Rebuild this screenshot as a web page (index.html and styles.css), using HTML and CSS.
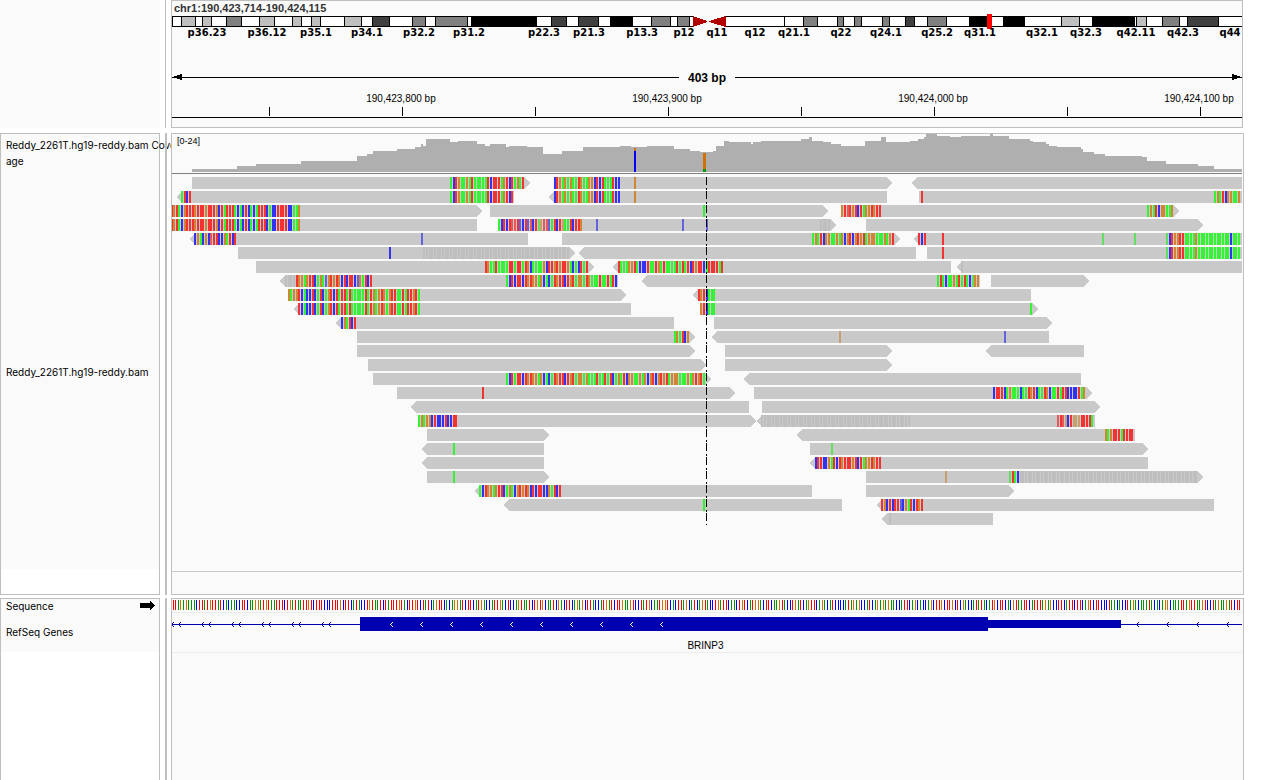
FILE: index.html
```html
<!DOCTYPE html>
<html lang="en">
<head>
<meta charset="utf-8">
<title>chr1:190,423,714-190,424,115</title>
<link rel="stylesheet" href="styles.css">
</head>
<body>
<main class="viewer">
  <section class="band band-header">
    <div class="names names-header"></div>
    <div class="divider divider-thin"></div>
    <div class="panel panel-header">
      <h1 class="locus">chr1:190,423,714-190,424,115</h1>
      <svg class="ideogram" id="ideogram" viewBox="172 14 1070 15" preserveAspectRatio="none"></svg>
      <div class="cyto-labels" id="cyto-labels"></div>
      <div class="span-row">
        <svg class="head" viewBox="0 0 10 7"><path d="M0 3h2v-1h3v-1h3v-1h2v6h-2v-1h-3v-1h-5z"/></svg>
        <span class="rule"></span>
        <span class="span-text">403 bp</span>
        <span class="rule"></span>
        <svg class="head" viewBox="0 0 10 7"><path d="M0 0h2v1h3v1h3v1h2v1h-5v1h-3v1h-2z"/></svg>
      </div>
      <div class="ruler-labels" id="ruler-labels"></div>
      <svg class="ruler" id="ruler" viewBox="172 104 1070 23" preserveAspectRatio="none"></svg>
    </div>
  </section>

  <section class="band band-data">
    <div class="names names-data">
      <div class="name name-coverage">Reddy_2261T.hg19-reddy.bam Cover<br>age</div>
      <div class="name name-reads">Reddy_2261T.hg19-reddy.bam</div>
    </div>
    <div class="divider"></div>
    <div class="panel panel-data">
      <div class="coverage-track">
        <svg class="coverage" id="coverage" viewBox="172 134 1070 40" preserveAspectRatio="none"></svg>
        <span class="scale">[0-24]</span>
      </div>
      <svg class="reads" id="reads" viewBox="172 174 1070 397" preserveAspectRatio="none"></svg>
    </div>
  </section>

  <section class="band band-features">
    <div class="names names-features">
      <div class="name name-sequence"><span>Sequence</span>
        <svg class="strand" viewBox="0 0 15 9"><path d="M0 2h10v-2h1v1h1v1h1v1h1v1h1v1h-1v1h-1v1h-1v1h-1v1h-1v-2h-10z"/></svg>
      </div>
      <div class="name name-genes">RefSeq Genes</div>
    </div>
    <div class="divider"></div>
    <div class="panel panel-features">
      <svg class="features" id="features" viewBox="172 599 1070 39" preserveAspectRatio="none"></svg>
      <div class="gene-name">BRINP3</div>
    </div>
  </section>
</main>
<script src="script.js"></script>
</body>
</html>
```
FILE: styles.css
```css
* { box-sizing: border-box; }

body {
  margin: 0;
  background: #fff;
  color: #000;
  font-family: "Liberation Sans", Arial, sans-serif;
  font-size: 10px;
}

.viewer {
  display: flex;
  flex-direction: column;
  min-height: 100vh;
}

.band {
  display: grid;
  grid-template-columns: 160px 2px 1fr;
  column-gap: 5px;
  padding-right: 18px;
}

.band-header { grid-template-columns: 160px 1px 1fr; padding-right: 19px; margin-bottom: 5px; }
.band-data { margin-bottom: 3px; }
.band-features { flex: 1; }

.divider { background: #bfbfbf; }

.panel {
  position: relative;
  z-index: 1;
  min-width: 0;
  border: 1px solid #bfbfbf;
  background: #fafafa;
}

.band .panel { margin-left: -1px; }
.band-header .panel { margin-left: 0; }

.names-header { background: #fafafa; }

.names-data,
.names-features {
  border: 1px solid #bfbfbf;
  background: #fff;
}

.name {
  padding-left: 5px;
  background: #fafafa;
  font-family: Inter, "Liberation Sans", sans-serif;
  line-height: 16px;
  white-space: nowrap;
}

svg { display: block; shape-rendering: crispEdges; }
.ideogram, .ruler, .coverage, .reads, .features { width: 100%; }

.locus {
  margin: 0;
  padding-left: 2px;
  height: 13px;
  font-size: 11px;
  line-height: 14px;
  color: #333;
}

.ideogram { height: 15px; }

.cyto-labels {
  position: relative;
  height: 10px;
  margin-top: -1px;
  font: bold 10px/10px "DejaVu Sans", sans-serif;
}

.cyto-labels span,
.ruler-labels span {
  position: absolute;
  top: 0;
  transform: translateX(-50%);
  white-space: nowrap;
}

.span-row {
  display: flex;
  align-items: center;
  height: 15px;
  margin-top: 32px;
  font-size: 12px;
  font-weight: bold;
}

.rule { flex: 1; height: 1px; background: #000; }
.span-text { padding: 2px 9px 0; line-height: 15px; }
.head { width: 10px; height: 7px; }

.ruler-labels { position: relative; height: 11px; margin-top: 8px; line-height: 12px; }
.ruler { height: 23px; }

.panel-data, .panel-features { padding-right: 1px; }
.panel-data { padding-bottom: 22px; }

.coverage-track { position: relative; }
.coverage { height: 40px; }
.scale { position: absolute; left: 5px; top: 1px; font-size: 9px; line-height: 12px; }

.reads { height: 398px; border-bottom: 1px solid #c8c8c8; }

.name-coverage { height: 40px; padding-top: 3px; }
.name-reads {
  display: flex;
  align-items: center;
  height: 395px;
}

.panel-features, .names-features { border-bottom: 0; }
.features { height: 39px; }
.gene-name { height: 15px; padding-right: 3px; line-height: 16px; text-align: center; border-bottom: 1px solid #ececec; }

.name-sequence {
  display: flex;
  align-items: center;
  justify-content: space-between;
  height: 14px;
  padding-right: 4px;
}
.strand { width: 15px; height: 9px; margin-bottom: 2px; }
.name-genes { height: 39px; padding-top: 11px; }
```
FILE: script.js
```js
const LEFT = 172, WIDTH = 1070, STEP = 2.6617;

function rect(x, y, w, h, fill) {
  return `<rect x="${x}" y="${y}" width="${w}" height="${h}" fill="${fill}"/>`;
}
function draw(id, parts) {
  document.getElementById(id).innerHTML = parts.join("");
}
function labels(id, list) {
  document.getElementById(id).innerHTML = list
    .map(([x, t]) => `<span style="left:${((x - LEFT) / WIDTH * 100).toFixed(2)}%">${t}</span>`)
    .join("");
}

/* Chromosome ideogram */
const K = "#000", L = "#bfbfbf", M = "#808080", D = "#404040";
const bands = [
  [181,195,L],[202,211,L],[226,241,M],[259,274,L],[292,301,L],[311,320,L],[344,361,L],
  [372,389,D],[412,425,M],[435,467,M],[471,536,K],[551,566,D],[578,598,D],[610,632,K],
  [651,670,M],[677,689,M],[784,784,K],[803,817,M],[837,843,M],[854,861,M],[882,889,M],
  [905,914,D],[927,946,M],[969,987,K],[1003,1024,K],[1061,1079,L],[1092,1134,K],
  [1136,1146,L],[1162,1179,M],[1187,1218,D]
];
const ideo = [rect(172,16,521,11,K), rect(173,17,520,9,"#fff"), rect(725,16,517,11,K), rect(726,17,516,9,"#fff")];
bands.forEach(([a, b, c]) => {
  ideo.push(rect(a, 16, b - a + 1, 11, K));
  if (b > a) ideo.push(rect(a + 1, 17, b - a - 1, 9, c));
});
ideo.push('<path d="M693 16L707 21v1L693 27zM726 16L709 21v1L726 27z" fill="#b20000"/>');
ideo.push(rect(987, 14, 5, 15, "#f00"));
draw("ideogram", ideo);

labels("cyto-labels", [
  [207,"p36.23"],[267,"p36.12"],[316,"p35.1"],[367,"p34.1"],[419,"p32.2"],[469,"p31.2"],
  [544,"p22.3"],[589,"p21.3"],[642,"p13.3"],[684,"p12"],[717,"q11"],[755,"q12"],
  [794,"q21.1"],[841,"q22"],[886,"q24.1"],[937,"q25.2"],[980,"q31.1"],[1042,"q32.1"],
  [1086,"q32.3"],[1136,"q42.11"],[1183,"q42.3"],[1230,"q44"]
]);

/* Ruler */
labels("ruler-labels", [
  [401,"190,423,800 bp"],[667,"190,423,900 bp"],[933,"190,424,000 bp"],[1199,"190,424,100 bp"]
]);
const ticks = [rect(172, 117, 1070, 1, K)];
for (let x = 269; x < 1242; x += 133) ticks.push(rect(x, 107, 1, 9, K));
draw("ruler", ticks);

/* Coverage: x where each step begins, y of its top */
const steps = [
  192,169,237,166,256,164,301,161,357,156,367,154,373,151,397,149,415,147,421,144,423,146,
  426,139,450,142,458,141,477,144,485,146,490,144,506,147,509,146,527,147,543,154,562,151,
  583,147,620,146,631,147,647,146,674,149,690,151,700,152,713,151,716,146,724,141,729,142,
  751,144,753,142,761,141,801,139,809,137,812,141,823,142,831,144,841,146,865,141,881,137,
  886,142,910,141,918,139,924,137,926,134,937,136,950,137,961,136,990,134,993,136,1009,139,
  1030,141,1033,142,1046,144,1049,146,1057,147,1081,149,1083,152,1094,154,1105,156,1142,157,
  1147,161,1166,164,1198,166,1214,169
];
let outline = "M192 172";
for (let i = 0; i < steps.length; i += 2) outline += `H${steps[i]}V${steps[i + 1]}`;
draw("coverage", [
  `<path d="${outline}H1242V172z" fill="#afafaf"/>`,
  rect(172, 173, 1070, 1, "#808080"),
  rect(634, 148, 2, 3, "#d17105"), rect(634, 151, 2, 21, "#00f"),
  rect(703, 153, 3, 16, "#d17105"), rect(703, 169, 3, 3, "#009600")
]);

/* Alignments: [start, end, direction], direction -1 left, 1 right, 0 none */
const rows = [
  [[192,525,1],[554,887,1],[917,1242,-1]],
  [[182,514,-1],[554,887,-1],[919,1242,0]],
  [[172,477,1],[490,823,1],[841,1174,1]],
  [[172,477,0],[498,831,1],[866,1198,1]],
  [[195,528,-1],[562,895,1],[919,1242,-1]],
  [[238,570,1],[584,916,-1],[927,1242,0]],
  [[256,589,1],[618,951,-1],[962,1242,-1]],
  [[285,618,-1],[647,980,-1],[991,1084,1]],
  [[288,621,1],[698,1031,-1]],
  [[299,631,-1],[700,1033,1]],
  [[341,674,-1],[714,1047,1]],
  [[357,690,1],[717,1049,-1]],
  [[357,690,1],[725,887,1],[991,1084,-1]],
  [[368,701,1],[725,887,1]],
  [[373,706,1],[749,1081,-1]],
  [[397,730,1],[754,1087,1]],
  [[416,749,-1],[762,1095,1]],
  [[418,751,1],[762,1095,-1]],
  [[427,544,1],[802,1135,-1]],
  [[427,544,-1],[810,1143,1]],
  [[427,544,-1],[815,1148,-1]],
  [[427,544,1],[866,1198,1]],
  [[480,812,-1],[866,1009,1]],
  [[509,842,-1],[882,1214,-1]],
  [[887,993,-1]]
];

/* Mismatched bases: [row, x, bases]; lower case is low quality, n is soft shading */
const clipA = "ACTGAAGATAAAAATCTTTAGTCT", clipB = "CTGAGAGAATGAAGGCTCTAAATCC";
const clipC = "TGTACGTTTGTTTGTTTGCTATTTACACTCACATTTCACCTTTTCCAAG";
const clipD = "aCTGGTTAAAAGAAAAAAAAAAAACAAA";
const clipE = "TCACCTCATCAGTCTATTATAAAAATATGAGTGAGTTAATATTGTA";
const marks = [
  [0,450,clipA + "AGAT"],[0,554,clipB],[0,634,"G"],
  [1,181,"ATCT"],[1,450,clipA],[1,554,clipB],[1,634,"G"],[1,921,"T"],[1,1214,"AGATCGGAAG"],
  [2,171,clipC],[2,703,"A"],[2,841,"GTtTGTCTAGGTGTT"],[2,1147,"AGATCGGAAG"],
  [3,171,clipC],[3,498,"ACTCTttTcCTctCTagttcATCTgAATCTTG"],[3,596,"c"],[3,682,"c"],[3,706,"c"],[3,820,"nnnn"],
  [4,194,"CGACGCtTTCCGATCT"],[4,421,"c"],[4,812,"AGATCGGAAGAGCGTCGTGTAGGGAAAGAGT"],
  [4,918,"TCT"],[4,942,"T"],[4,1102,"a"],[4,1134,"a"],[4,1166,clipD],
  [5,389,"C"],[5,422,"n".repeat(55)],[5,942,"T"],[5,1166,clipD],
  [6,485,"TGAATAAAATTATTATGCAAAAGCTTGTGTTGACACTAT"],
  [6,618,"TAAAGGTACCCTAATGATAAAATATATCTGTTCATTTTAT"],[6,961,"n"],
  [7,285,"nnnn"],[7,296,"TGGAGTTCAGAcGTGTGCTCTTCcGATCT"],
  [7,506,"ACTCTTCTGTGGAGCACATGTTCTGTAGGATGAAATAATATC"],[7,937,"ATACAAGATATACaGG"],
  [8,288,"GAGG" + clipE],[8,698,"TGTCAAA"],
  [9,298,clipE],[9,700,"GTCAAA"],[9,1030,"A"],
  [10,341,"CGATCT"],
  [11,674,"AGATCG"],[11,839,"g"],[11,1004,"c"],
  [14,506,"ACTATTCTGTGGAGCACATGTTCTGTAGGAGAAATAATATCAGATCGGAAGAGCGTCGTGTAGGGAAAGAGTGTA"],
  [15,482,"T"],[15,993,"CTTTCAGAAACAATGTCAATGCAATATTCCCCTAG"],
  [17,418,"AGAGGCTCCCTCCTT"],[17,761,"n".repeat(56)],[17,1057,"tTtgCTgggTTTTA"],
  [18,1105,"GAGTTTATTTT"],
  [19,453,"A"],[19,831,"a"],
  [20,815,"CTTCCGATCTGTTTGTCTAGGTGTT"],
  [21,453,"A"],[21,945,"g"],[21,1009,"aTAC" + "n".repeat(67)],
  [22,479,"ACTGGAGTTCAGACGTGTGCTCTTCCGATCT"],
  [23,703,"A"],[23,881,"TGCTCTTcCGATCTGT"],
  [24,887,"n"]
];
const tint = {
  A: "#32f432", C: "#3232f4", G: "#d18532", T: "#f43232",
  a: "#5fe05f", c: "#6464dc", g: "#c8a070", t: "#e65a5a", n: "#bebebe"
};
const reads = [];
rows.forEach((row, i) => {
  const y = 177 + 14 * i;
  row.forEach(([a, b, d]) => {
    const left = d < 0 ? `L${a - 5} ${y + 7}V${y + 6}` : "";
    const right = d > 0 ? `L${b + 5} ${y + 6}` : "";
    reads.push(`<path d="M${a} ${y}H${b}${right}L${b} ${y + 12}H${a}${left}z" fill="#c9c9c9"/>`);
  });
});
marks.forEach(([i, x, bases]) => {
  const first = Math.ceil((x - 171) / STEP);
  [...bases].forEach((base, k) => {
    reads.push(rect(Math.floor(171 + STEP * (first + k)), 177 + 14 * i, 2, 12, tint[base]));
  });
});
reads.push('<path d="M706.5 177V525" stroke="#000" stroke-dasharray="8 3 2 1"/>');
draw("reads", reads);

/* Reference sequence and gene model */
const solid = { A: "#009600", C: "#0000ff", G: "#d17105", T: "#ff0000" };
const sequence =
  "TTAGAGAAACTTATGTTATCACAACCTTCAAGGATGTAATTTCTGATAATTGTCTTTCCCTTTGCTTCATACCTGTAATCTATTTGTACTTGTCTAT" +
  "CAGTTCACAGGATCTTCATGACCATTGACTCCAGTAATCTGTGCAATCGACTTCAGAGCTTACCATGATCTTGAAGTCCTATGCAATGGTCACTTAGCATCAGTACCTGATTCAACTGTCATGGACTTCAAGTACCTGATCAGTTCAGACATC" +
  "CCCATAGAGCCATCAGAGAGAACCATTCAGCACCAGCTTGCTTGCTCGACCATATACATGCTTCACGTAATTCATTTAGAGCCTTCATTCTTCAGTCTTCCCTAACACCTAGACAAATACACAGGCAAATTAGTTAAGTCCTAGAAGATCTTCCTT";
const features = [];
[...sequence].forEach((base, k) => {
  const x = Math.floor(173 + 2.66 * k);
  if (x < 1242) features.push(rect(x, 600, 1, 10, solid[base]));
});
features.push(rect(172, 612, 1070, 1, "#ececec"));
const blue = "#0000b2";
features.push(rect(172, 624, 1070, 1, blue), rect(360, 617, 628, 14, blue), rect(988, 620, 133, 8, blue));
function chevron(x, fill) {
  features.push(rect(x, 624, 1, 1, fill), rect(x + 1, 623, 1, 1, fill), rect(x + 1, 625, 1, 1, fill),
    rect(x + 2, 622, 1, 1, fill), rect(x + 2, 626, 1, 1, fill));
}
for (let x = 171; x < 330; x += 30) { chevron(x, blue); chevron(x + 7, blue); }
for (let x = 390; x < 670; x += 30) chevron(x, "#fff");
for (let x = 1136; x < 1240; x += 30) chevron(x, blue);
draw("features", features);
```
